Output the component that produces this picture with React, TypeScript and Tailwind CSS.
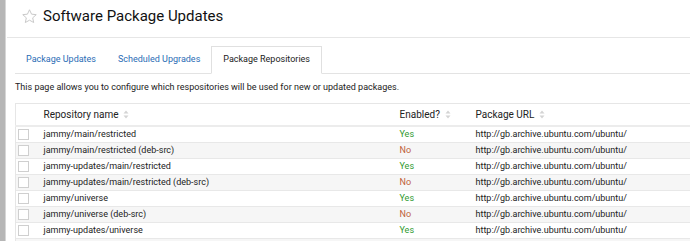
import React from "react";

const rows: { name: string; enabled: boolean }[] = [
  { name: "jammy/main/restricted", enabled: true },
  { name: "jammy/main/restricted (deb-src)", enabled: false },
  { name: "jammy-updates/main/restricted", enabled: true },
  { name: "jammy-updates/main/restricted (deb-src)", enabled: false },
  { name: "jammy/universe", enabled: true },
  { name: "jammy/universe (deb-src)", enabled: false },
  { name: "jammy-updates/universe", enabled: true },
  { name: "jammy-updates/universe (deb-src)", enabled: false },
];

function SortIcon() {
  return (
    <svg width="6" height="9" viewBox="0 0 6 9" className="ml-[5px] inline-block align-[-1px]" aria-hidden="true">
      <path d="M3 0.5 L5.5 3.6 L0.5 3.6 Z" fill="#d4d4d4" />
      <path d="M3 8.5 L5.5 5.4 L0.5 5.4 Z" fill="#d4d4d4" />
    </svg>
  );
}

function Star() {
  return (
    <svg width="17" height="17" viewBox="0 0 24 24" fill="none" aria-hidden="true">
      <path
        d="M12 2.5l2.9 6.2 6.6.7-5 4.5 1.4 6.6L12 17.2l-5.9 3.3 1.4-6.6-5-4.5 6.6-.7z"
        stroke="#c4c4c4"
        strokeWidth="1.3"
        strokeLinejoin="round"
      />
    </svg>
  );
}

export default function App() {
  return (
    <div className="flex w-[690px] h-[241px] overflow-hidden bg-white font-['Roboto',sans-serif] text-[#222]">
      {/* side frame */}
      <div className="w-[6px] shrink-0 bg-[#b6b6b6] border-r border-[#d6d6d6]" />

      <div className="flex-1 min-w-0 pl-[1px]">
        {/* Title */}
        <div className="h-[38px] flex items-center gap-[5px] pl-[14px] pb-[4px] border-b border-[#e6e6e6]">
          <Star />
          <h1 className="text-[15px] leading-none text-[#111]">Software Package Updates</h1>
        </div>

        {/* Tabs */}
        <div className="ml-[8px] mt-[8px] flex items-end h-[28px] border-b border-[#e3e3e3] text-[9px]">
          <div className="h-[27px] px-[11px] flex items-center text-[#2b6cb5]">Package Updates</div>
          <div className="h-[27px] px-[11px] flex items-center text-[#2b6cb5]">Scheduled Upgrades</div>
          <div className="h-[28px] -mb-px px-[11px] flex items-center bg-white border border-b-white border-[#e0e0e0] text-[#222]">
            Package Repositories
          </div>
        </div>

        {/* Description */}
        <p className="ml-[8px] mt-[7px] text-[9px] leading-[12px]">
          This page allows you to configure which respositories will be used for new or updated packages.
        </p>

        {/* Table */}
        <div className="ml-[8px] mt-[10px]">
          <table className="w-[700px] border-collapse text-[9px] table-fixed">
            <colgroup>
              <col className="w-[23px]" />
              <col className="w-[356px]" />
              <col className="w-[76px]" />
              <col />
            </colgroup>
            <thead>
              <tr className="h-[22px] border-t border-b-2 border-[#e6e6e6] border-b-[#ececec]">
                <th className="border-l border-[#e6e6e6]" />
                <th className="text-left font-normal text-[10px] pl-[5px]">
                  Repository name
                  <SortIcon />
                </th>
                <th className="text-left font-normal text-[10px] pl-[5px]">
                  Enabled?
                  <SortIcon />
                </th>
                <th className="text-left font-normal text-[10px] pl-[5px]">
                  Package URL
                  <SortIcon />
                </th>
              </tr>
            </thead>
            <tbody>
              {rows.map((r, i) => (
                <tr key={i} className={`h-[16px] border-b border-[#e8e8e8] ${i % 2 ? "bg-[#f6f6f6]" : "bg-white"}`}>
                  <td className="border-l border-[#e6e6e6] pl-[2px]">
                    <div className="w-[11px] h-[11px] border border-[#cfcfcf] bg-white" />
                  </td>
                  <td className="pl-[5px] leading-[15px]">{r.name}</td>
                  <td className={`pl-[5px] leading-[15px] ${r.enabled ? "text-[#2f9a2f]" : "text-[#c0623a]"}`}>
                    {r.enabled ? "Yes" : "No"}
                  </td>
                  <td className="pl-[5px] leading-[15px]">http://gb.archive.ubuntu.com/ubuntu/</td>
                </tr>
              ))}
            </tbody>
          </table>
        </div>
      </div>
    </div>
  );
}
